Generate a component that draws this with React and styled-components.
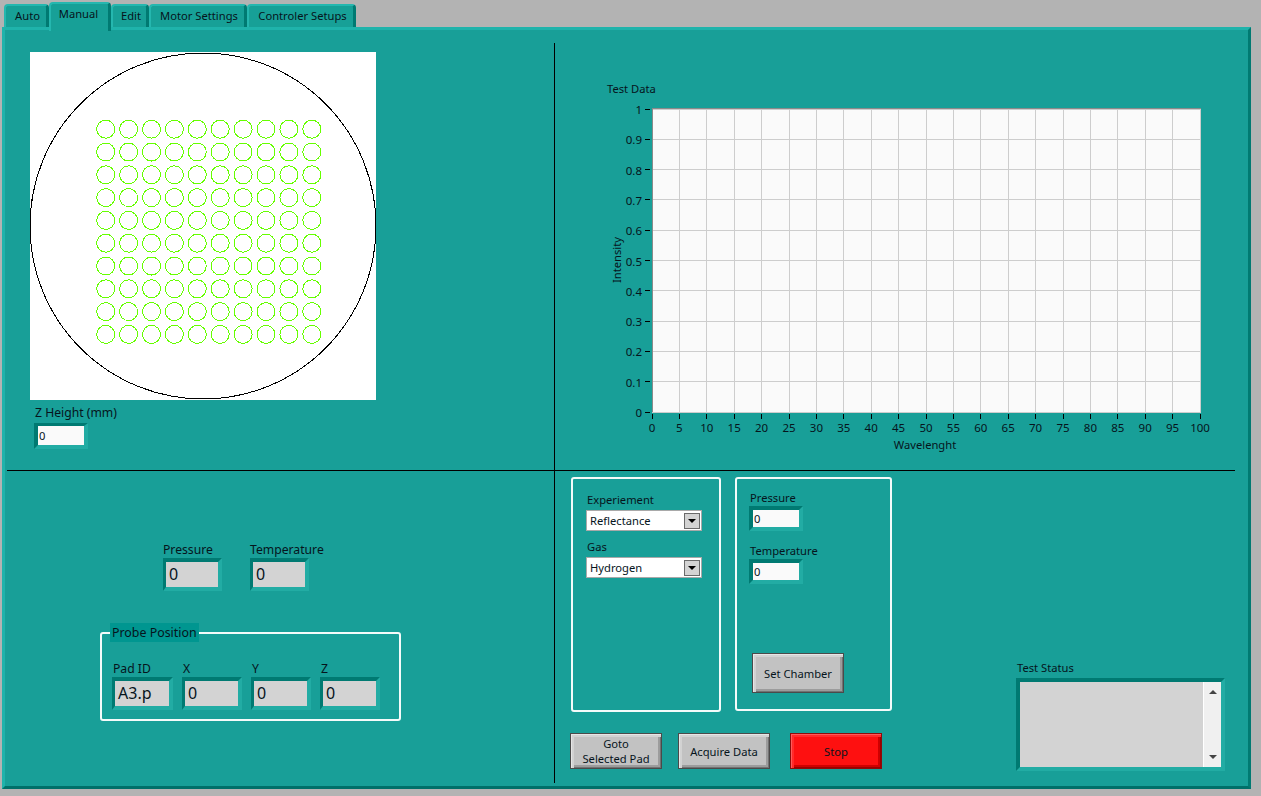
import React from "react";
import styled, { createGlobalStyle } from "styled-components";

const FONT = `"Noto Sans", "Open Sans", sans-serif`;
const TEXT = "#06141c";

const tabs = [
  { name: "Auto", width: 45 },
  { name: "Manual", width: 62, active: true },
  { name: "Edit", width: 38 },
  { name: "Motor Settings", width: 98 },
  { name: "Controler Setups", width: 109 },
];

const probeFields = [
  { label: "Pad ID", value: "A3.p", width: 61 },
  { label: "X", value: "0", width: 60 },
  { label: "Y", value: "0", width: 60 },
  { label: "Z", value: "0", width: 60 },
];

const range = n => Array.from({ length: n }, (_, i) => i);

const Wafer = () => (
  <WaferSvg width="346" height="348" viewBox="0 0 346 348">
    <rect width="346" height="348" fill="#fff" />
    <circle cx="173" cy="174" r="173" fill="none" stroke="#000" strokeWidth="1" />
    {range(10).map(row =>
      range(10).map(col => (
        <circle
          key={`${row}-${col}`}
          cx={75.7 + col * 22.9}
          cy={77.2 + row * 22.8}
          r="9"
          fill="none"
          stroke="#66ff00"
          strokeWidth="1"
        />
      ))
    )}
  </WaferSvg>
);

const Chart = () => {
  const xAt = i => 652 + i * 27.4;
  const yAt = i => 412 - i * 30.3;
  return (
    <ChartSvg width="610" height="375" viewBox="600 80 610 375">
      <AxisTitle x="607" y="93">
        Test Data
      </AxisTitle>
      <rect x="652" y="108" width="549" height="304" fill="#fafafa" />
      {range(21).map(i => (
        <g key={i}>
          <line x1={xAt(i)} x2={xAt(i)} y1="108" y2="412" stroke="#cdcdcd" />
          <line x1={xAt(i)} x2={xAt(i)} y1="414" y2="419" stroke="#000" />
          <text x={xAt(i)} y="432" textAnchor="middle">
            {i * 5}
          </text>
        </g>
      ))}
      {range(11).map(i => (
        <g key={i}>
          <line x1="652" x2="1201" y1={yAt(i)} y2={yAt(i)} stroke="#cdcdcd" />
          <line x1="645" x2="650" y1={yAt(i)} y2={yAt(i)} stroke="#000" />
          <text x="642" y={yAt(i) + 5} textAnchor="end">
            {i === 0 ? "0" : i === 10 ? "1" : `0.${i}`}
          </text>
        </g>
      ))}
      <line x1="652" x2="1201" y1="108.5" y2="108.5" stroke="#8a8a8a" />
      <line x1="652.5" x2="652.5" y1="108" y2="412" stroke="#8a8a8a" />
      <AxisTitle x="925" y="449" textAnchor="middle">
        Wavelenght
      </AxisTitle>
      <AxisTitle
        x="0"
        y="0"
        textAnchor="middle"
        transform="translate(621 260) rotate(-90)"
      >
        Intensity
      </AxisTitle>
    </ChartSvg>
  );
};

const App = () => (
  <>
    <GlobalStyle />
    <Page>
      <TabStrip>
        {tabs.map(tab => (
          <Tab key={tab.name} $width={tab.width} $active={tab.active}>
            {tab.name}
          </Tab>
        ))}
      </TabStrip>
      <Panel>
        <Board>
          <WaferCell>
            <Wafer />
            <ZGroup>
              <BigLabel>Z Height (mm)</BigLabel>
              <ZEntry>0</ZEntry>
            </ZGroup>
          </WaferCell>
          <ChartCell>
            <Chart />
          </ChartCell>
          <ReadoutCell>
            <ReadoutRow>
              <div>
                <ReadoutLabel>Pressure</ReadoutLabel>
                <Readout $width={59}>0</Readout>
              </div>
              <div>
                <ReadoutLabel>Temperature</ReadoutLabel>
                <Readout $width={59}>0</Readout>
              </div>
            </ReadoutRow>
            <ProbeBox>
              <ProbeTitle>Probe Position</ProbeTitle>
              {probeFields.map(field => (
                <div key={field.label}>
                  <BigLabel>{field.label}</BigLabel>
                  <Readout $width={field.width}>{field.value}</Readout>
                </div>
              ))}
            </ProbeBox>
          </ReadoutCell>
          <ControlCell>
            <ControlColumn>
              <BoxRow>
                <ExperimentBox>
                  <Label>Experiement</Label>
                  <Select>
                    Reflectance
                    <SelectArrow />
                  </Select>
                  <GasLabel>Gas</GasLabel>
                  <Select>
                    Hydrogen
                    <SelectArrow />
                  </Select>
                </ExperimentBox>
                <ChamberBox>
                  <Label>Pressure</Label>
                  <Entry>0</Entry>
                  <TemperatureLabel>Temperature</TemperatureLabel>
                  <Entry>0</Entry>
                  <SetChamber>Set Chamber</SetChamber>
                </ChamberBox>
              </BoxRow>
              <ButtonRow>
                <ActionButton>
                  Goto
                  <br />
                  Selected Pad
                </ActionButton>
                <ActionButton>Acquire Data</ActionButton>
                <ActionButton $stop>Stop</ActionButton>
              </ButtonRow>
            </ControlColumn>
            <StatusGroup>
              <StatusLabel>Test Status</StatusLabel>
              <StatusFrame>
                <StatusText />
                <Scrollbar>
                  <ArrowUp />
                  <ArrowDown />
                </Scrollbar>
              </StatusFrame>
            </StatusGroup>
          </ControlCell>
        </Board>
      </Panel>
    </Page>
  </>
);

export default App;

const GlobalStyle = createGlobalStyle`
  html, body {
    margin: 0;
    height: 796px;
    overflow: hidden;
    background: #b3b3b3;
  }
  * {
    box-sizing: border-box;
  }
  body {
    font-family: ${FONT};
    font-size: 11.2px;
    color: ${TEXT};
  }
`;

const Page = styled.div`
  width: 1261px;
  height: 796px;
  padding-left: 2px;
`;

const TabStrip = styled.div`
  display: flex;
  align-items: flex-end;
  height: 27px;
  padding-left: 2px;
`;

const Tab = styled.div`
  position: relative;
  z-index: ${p => (p.$active ? 2 : 1)};
  width: ${p => p.$width}px;
  height: ${p => (p.$active ? 29 : 23)}px;
  margin-bottom: ${p => (p.$active ? -4 : 0)}px;
  padding: ${p => (p.$active ? "2px 2px 0 0" : "2px 0 0 3px")};
  line-height: 16px;
  text-align: center;
  white-space: nowrap;
  background: #17a097;
  border-style: solid;
  border-width: 2px 3px 0 2px;
  border-color: #25b7af #007a72 transparent #25b7af;
  border-radius: 4px 4px 0 0;
`;

const Panel = styled.div`
  width: 1249px;
  height: 762px;
  padding: 13px 13px 3px 2px;
  background: #189f98;
  border-style: solid;
  border-width: 3px;
  border-color: #1fb3ab #007a72 #007069 #1fb3ab;
`;

const Board = styled.div`
  display: grid;
  grid-template-columns: 548px 1fr;
  grid-template-rows: 428px 1fr;
  height: 100%;
`;

const WaferCell = styled.div`
  padding: 9px 0 0 23px;
  border-right: 1px solid #000;
  border-bottom: 1px solid #000;
`;

const WaferSvg = styled.svg`
  display: block;
  shape-rendering: crispEdges;
`;

const ZGroup = styled.div`
  margin: 5px 0 0 4px;
`;

const ChartCell = styled.div`
  padding: 37px 0 0 45px;
  border-bottom: 1px solid #000;
`;

const ChartSvg = styled.svg`
  display: block;
  font-family: ${FONT};
  font-size: 11.5px;
  fill: ${TEXT};
  line {
    shape-rendering: crispEdges;
  }
`;

const AxisTitle = styled.text`
  font-size: 11.2px;
`;

const ReadoutCell = styled.div`
  padding: 71px 0 0 93px;
  border-right: 1px solid #000;
`;

const Label = styled.div`
  height: 16px;
  padding-left: 1px;
  line-height: 16px;
  white-space: nowrap;
`;

const BigLabel = styled(Label)`
  font-size: 12.2px;
`;

const ReadoutLabel = styled(BigLabel)`
  padding-left: 0;
`;

const StatusLabel = styled(Label)`
  margin-bottom: 2px;
`;

const Bevel = styled.div`
  border-style: solid;
  border-width: 4px;
  border-color: #007a72 #22aca4 #22aca4 #007a72;
`;

const Entry = styled(Bevel)`
  width: 54px;
  height: 25px;
  padding-left: 1px;
  line-height: 17px;
  background: #fafafa;
  background-clip: padding-box;
`;

const ZEntry = styled(Entry)`
  height: 26px;
  margin-top: 2px;
  border-top-width: 3px;
  line-height: 19px;
`;

const Readout = styled(Bevel)`
  width: ${p => p.$width}px;
  height: 33px;
  padding-left: 3px;
  font-size: 16px;
  line-height: 25px;
  background: #d3d3d3;
  background-clip: padding-box;
  border-left-width: 3px;
`;

const ReadoutRow = styled.div`
  display: flex;
  gap: 28px;
  margin-left: 63px;
`;

const ProbeBox = styled.div`
  position: relative;
  display: flex;
  gap: 9px;
  width: 301px;
  height: 89px;
  margin-top: 41px;
  padding: 27px 0 0 10px;
  border: 2px solid #f4fbfa;
  border-radius: 3px;
`;

const ProbeTitle = styled.div`
  position: absolute;
  top: -11px;
  left: 8px;
  height: 19px;
  padding: 0 2px;
  font-size: 12.4px;
  line-height: 19px;
  background: #009690;
`;

const ControlCell = styled.div`
  display: flex;
  padding: 6px 10px 12px 15px;
`;

const ControlColumn = styled.div`
  display: flex;
  flex-direction: column;
`;

const BoxRow = styled.div`
  display: flex;
  align-items: flex-start;
  gap: 14px;
  margin-left: 1px;
`;

const GroupBox = styled.div`
  border: 2px solid #f4fbfa;
  border-radius: 3px;
`;

const ExperimentBox = styled(GroupBox)`
  width: 150px;
  height: 235px;
  padding: 13px 0 0 13px;
`;

const ChamberBox = styled(GroupBox)`
  width: 157px;
  height: 234px;
  padding: 11px 0 0 12px;
`;

const GasLabel = styled(Label)`
  margin-top: 8px;
`;

const TemperatureLabel = styled(Label)`
  margin-top: 12px;
`;

const Select = styled.div`
  display: flex;
  align-items: center;
  justify-content: space-between;
  width: 116px;
  height: 21px;
  margin-top: 2px;
  padding: 0 1px 0 3px;
  background: #fff;
  border: 1px solid #a9a9a9;
`;

const SelectArrow = styled.span`
  display: flex;
  align-items: center;
  justify-content: center;
  width: 16px;
  height: 16px;
  background: #d3d3d3;
  border: 1px solid #6a6a6a;
  &::after {
    content: "";
    border-style: solid;
    border-width: 4px 4px 0;
    border-color: #000 transparent transparent;
  }
`;

const ActionButton = styled.button`
  width: 92px;
  height: 36px;
  padding: 0;
  font-family: ${FONT};
  font-size: 11.2px;
  line-height: 15px;
  color: ${TEXT};
  background: ${p => (p.$stop ? "#fe1010" : "#c2c2c2")};
  border: 1px solid ${p => (p.$stop ? "#8e0a0a" : "#4a4a4a")};
  box-shadow: ${p =>
    p.$stop
      ? "inset 1px 1px 0 #ff5a5a, inset 3px 3px 0 #ff2a2a, inset -1px -1px 0 #9c0000, inset -3px -3px 0 #cf0000"
      : "inset 1px 1px 0 #e6e6e6, inset 3px 3px 0 #d2d2d2, inset -1px -1px 0 #727272, inset -3px -3px 0 #9c9c9c"};
`;

const SetChamber = styled(ActionButton)`
  display: block;
  height: 40px;
  margin: 69px 0 0 3px;
`;

const ButtonRow = styled.div`
  display: flex;
  gap: 16px;
  margin-top: 21px;
  & > :last-child {
    margin-left: 4px;
  }
`;

const StatusGroup = styled.div`
  align-self: flex-end;
  margin-left: auto;
`;

const StatusFrame = styled(Bevel)`
  display: flex;
  width: 209px;
  height: 93px;
`;

const StatusText = styled.div`
  flex: 1;
  background: #d3d3d3;
`;

const Scrollbar = styled.div`
  display: flex;
  flex-direction: column;
  align-items: center;
  justify-content: space-between;
  width: 18px;
  padding: 8px 0;
  background: #f0f0f0;
  border-left: 1px solid #fff;
`;

const ArrowUp = styled.span`
  border-style: solid;
  border-width: 0 4px 4px;
  border-color: transparent transparent #444;
`;

const ArrowDown = styled.span`
  border-style: solid;
  border-width: 4px 4px 0;
  border-color: #444 transparent transparent;
`;
